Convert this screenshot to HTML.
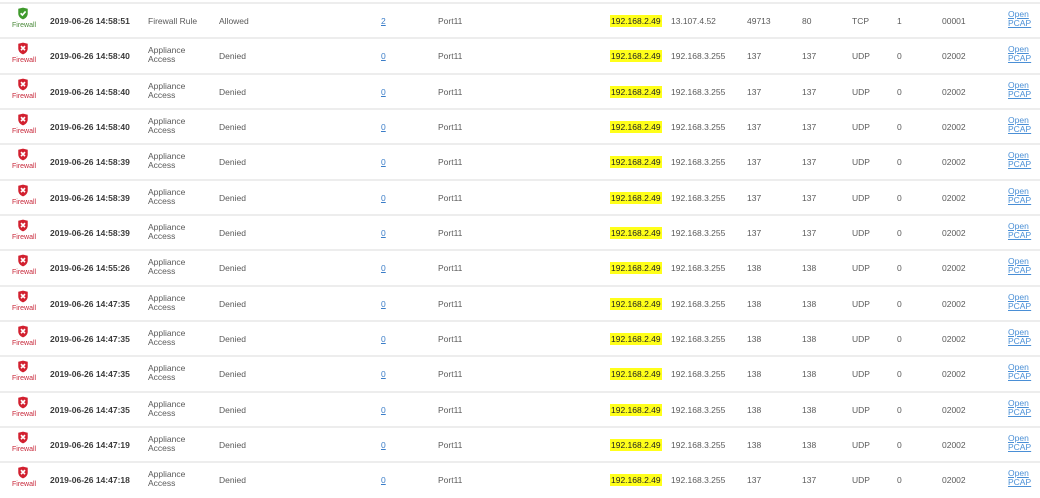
<!DOCTYPE html>
<html><head><meta charset="utf-8"><style>
body{margin:0;width:1040px;height:496px;overflow:hidden;background:#fff;font-family:"Liberation Sans",sans-serif;font-size:8.5px;color:#5a5a5a;position:relative}
.r{position:absolute;left:0;width:1040px;height:35px;border-top:2px solid #ededed}
.r>*{position:absolute}
.ic{left:12px;top:3px;width:22px;text-align:center;font-size:7px}
.ic svg{display:block;margin:0 auto 2px}
.g{color:#4a8a3a}.rd{color:#c8283a}
.d{left:50px;top:12px;font-weight:bold;color:#3a3a3a;font-size:8.5px}
.t{left:148px;top:7px;line-height:8.5px}
.t1{left:148px;top:12px}
.a{left:219px;top:12px}
.n{left:381px;top:12px;color:#3b7dc8;text-decoration:underline}
.p{left:438px;top:12px}
.s{left:610px;top:11px;background:#ffff1a;color:#222;padding:1px 1px}
.ds{left:671px;top:12px}
.sp{left:747px;top:12px}
.dp{left:802px;top:12px}
.pr{left:852px;top:12px}
.x{left:897px;top:12px}
.c{left:942px;top:12px}
.l{left:1008px;top:6px;line-height:9px;color:#4a8fd6;text-decoration:underline}
</style></head><body>
<svg width="0" height="0" style="position:absolute"><defs>
<symbol id="sg" viewBox="0 0 10 11"><path d="M1 1.5L5 0.5L9 1.5V5.5C9 8 7 9.8 5 10.5C3 9.8 1 8 1 5.5Z" fill="#3f9a2c"/><path d="M3 5.3L4.5 6.8L7.2 3.8" stroke="#fff" stroke-width="1.4" fill="none"/></symbol>
<symbol id="sr" viewBox="0 0 10 11"><path d="M1 1.5L5 0.5L9 1.5V5.5C9 8 7 9.8 5 10.5C3 9.8 1 8 1 5.5Z" fill="#d2202f"/><path d="M3.3 3.5L6.7 6.9M6.7 3.5L3.3 6.9" stroke="#fff" stroke-width="1.4"/></symbol>
</defs></svg>

<div class="r" style="top:2px"><div class="ic g"><svg width="12" height="13"><use href="#sg"/></svg>Firewall</div><span class="d">2019-06-26 14:58:51</span><span class="t1">Firewall Rule</span><span class="a">Allowed</span><span class="n">2</span><span class="p">Port11</span><span class="s">192.168.2.49</span><span class="ds">13.107.4.52</span><span class="sp">49713</span><span class="dp">80</span><span class="pr">TCP</span><span class="x">1</span><span class="c">00001</span><span class="l">Open<br>PCAP</span></div>

<div class="r" style="top:37px"><div class="ic rd"><svg width="12" height="13"><use href="#sr"/></svg>Firewall</div><span class="d">2019-06-26 14:58:40</span><span class="t">Appliance<br>Access</span><span class="a">Denied</span><span class="n">0</span><span class="p">Port11</span><span class="s">192.168.2.49</span><span class="ds">192.168.3.255</span><span class="sp">137</span><span class="dp">137</span><span class="pr">UDP</span><span class="x">0</span><span class="c">02002</span><span class="l">Open<br>PCAP</span></div>

<div class="r" style="top:73px"><div class="ic rd"><svg width="12" height="13"><use href="#sr"/></svg>Firewall</div><span class="d">2019-06-26 14:58:40</span><span class="t">Appliance<br>Access</span><span class="a">Denied</span><span class="n">0</span><span class="p">Port11</span><span class="s">192.168.2.49</span><span class="ds">192.168.3.255</span><span class="sp">137</span><span class="dp">137</span><span class="pr">UDP</span><span class="x">0</span><span class="c">02002</span><span class="l">Open<br>PCAP</span></div>

<div class="r" style="top:108px"><div class="ic rd"><svg width="12" height="13"><use href="#sr"/></svg>Firewall</div><span class="d">2019-06-26 14:58:40</span><span class="t">Appliance<br>Access</span><span class="a">Denied</span><span class="n">0</span><span class="p">Port11</span><span class="s">192.168.2.49</span><span class="ds">192.168.3.255</span><span class="sp">137</span><span class="dp">137</span><span class="pr">UDP</span><span class="x">0</span><span class="c">02002</span><span class="l">Open<br>PCAP</span></div>

<div class="r" style="top:143px"><div class="ic rd"><svg width="12" height="13"><use href="#sr"/></svg>Firewall</div><span class="d">2019-06-26 14:58:39</span><span class="t">Appliance<br>Access</span><span class="a">Denied</span><span class="n">0</span><span class="p">Port11</span><span class="s">192.168.2.49</span><span class="ds">192.168.3.255</span><span class="sp">137</span><span class="dp">137</span><span class="pr">UDP</span><span class="x">0</span><span class="c">02002</span><span class="l">Open<br>PCAP</span></div>

<div class="r" style="top:179px"><div class="ic rd"><svg width="12" height="13"><use href="#sr"/></svg>Firewall</div><span class="d">2019-06-26 14:58:39</span><span class="t">Appliance<br>Access</span><span class="a">Denied</span><span class="n">0</span><span class="p">Port11</span><span class="s">192.168.2.49</span><span class="ds">192.168.3.255</span><span class="sp">137</span><span class="dp">137</span><span class="pr">UDP</span><span class="x">0</span><span class="c">02002</span><span class="l">Open<br>PCAP</span></div>

<div class="r" style="top:214px"><div class="ic rd"><svg width="12" height="13"><use href="#sr"/></svg>Firewall</div><span class="d">2019-06-26 14:58:39</span><span class="t">Appliance<br>Access</span><span class="a">Denied</span><span class="n">0</span><span class="p">Port11</span><span class="s">192.168.2.49</span><span class="ds">192.168.3.255</span><span class="sp">137</span><span class="dp">137</span><span class="pr">UDP</span><span class="x">0</span><span class="c">02002</span><span class="l">Open<br>PCAP</span></div>

<div class="r" style="top:249px"><div class="ic rd"><svg width="12" height="13"><use href="#sr"/></svg>Firewall</div><span class="d">2019-06-26 14:55:26</span><span class="t">Appliance<br>Access</span><span class="a">Denied</span><span class="n">0</span><span class="p">Port11</span><span class="s">192.168.2.49</span><span class="ds">192.168.3.255</span><span class="sp">138</span><span class="dp">138</span><span class="pr">UDP</span><span class="x">0</span><span class="c">02002</span><span class="l">Open<br>PCAP</span></div>

<div class="r" style="top:285px"><div class="ic rd"><svg width="12" height="13"><use href="#sr"/></svg>Firewall</div><span class="d">2019-06-26 14:47:35</span><span class="t">Appliance<br>Access</span><span class="a">Denied</span><span class="n">0</span><span class="p">Port11</span><span class="s">192.168.2.49</span><span class="ds">192.168.3.255</span><span class="sp">138</span><span class="dp">138</span><span class="pr">UDP</span><span class="x">0</span><span class="c">02002</span><span class="l">Open<br>PCAP</span></div>

<div class="r" style="top:320px"><div class="ic rd"><svg width="12" height="13"><use href="#sr"/></svg>Firewall</div><span class="d">2019-06-26 14:47:35</span><span class="t">Appliance<br>Access</span><span class="a">Denied</span><span class="n">0</span><span class="p">Port11</span><span class="s">192.168.2.49</span><span class="ds">192.168.3.255</span><span class="sp">138</span><span class="dp">138</span><span class="pr">UDP</span><span class="x">0</span><span class="c">02002</span><span class="l">Open<br>PCAP</span></div>

<div class="r" style="top:355px"><div class="ic rd"><svg width="12" height="13"><use href="#sr"/></svg>Firewall</div><span class="d">2019-06-26 14:47:35</span><span class="t">Appliance<br>Access</span><span class="a">Denied</span><span class="n">0</span><span class="p">Port11</span><span class="s">192.168.2.49</span><span class="ds">192.168.3.255</span><span class="sp">138</span><span class="dp">138</span><span class="pr">UDP</span><span class="x">0</span><span class="c">02002</span><span class="l">Open<br>PCAP</span></div>

<div class="r" style="top:391px"><div class="ic rd"><svg width="12" height="13"><use href="#sr"/></svg>Firewall</div><span class="d">2019-06-26 14:47:35</span><span class="t">Appliance<br>Access</span><span class="a">Denied</span><span class="n">0</span><span class="p">Port11</span><span class="s">192.168.2.49</span><span class="ds">192.168.3.255</span><span class="sp">138</span><span class="dp">138</span><span class="pr">UDP</span><span class="x">0</span><span class="c">02002</span><span class="l">Open<br>PCAP</span></div>

<div class="r" style="top:426px"><div class="ic rd"><svg width="12" height="13"><use href="#sr"/></svg>Firewall</div><span class="d">2019-06-26 14:47:19</span><span class="t">Appliance<br>Access</span><span class="a">Denied</span><span class="n">0</span><span class="p">Port11</span><span class="s">192.168.2.49</span><span class="ds">192.168.3.255</span><span class="sp">138</span><span class="dp">138</span><span class="pr">UDP</span><span class="x">0</span><span class="c">02002</span><span class="l">Open<br>PCAP</span></div>

<div class="r" style="top:461px"><div class="ic rd"><svg width="12" height="13"><use href="#sr"/></svg>Firewall</div><span class="d">2019-06-26 14:47:18</span><span class="t">Appliance<br>Access</span><span class="a">Denied</span><span class="n">0</span><span class="p">Port11</span><span class="s">192.168.2.49</span><span class="ds">192.168.3.255</span><span class="sp">137</span><span class="dp">137</span><span class="pr">UDP</span><span class="x">0</span><span class="c">02002</span><span class="l">Open<br>PCAP</span></div>
</body></html>
